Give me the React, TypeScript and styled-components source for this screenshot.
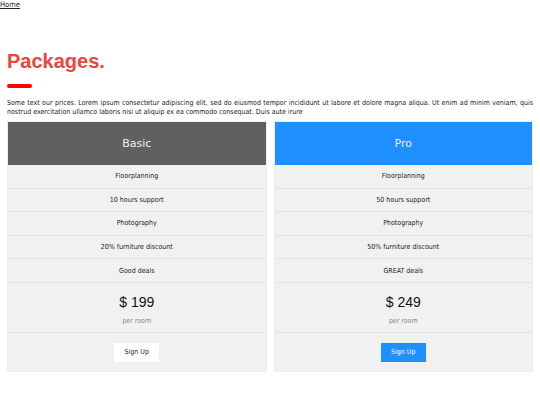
import { createGlobalStyle } from 'styled-components';
import styled from 'styled-components';

const GlobalStyle = createGlobalStyle`
  body {
    margin: 0;
    background: #fff;
    font-family: 'DejaVu Sans Condensed', 'DejaVu Sans', Verdana, sans-serif;
    color: #222;
  }
`;

type Plan = {
  name: string;
  color: string;
  features: string[];
  price: string;
  primary?: boolean;
};

const plans: Plan[] = [
  {
    name: 'Basic',
    color: '#606060',
    features: [
      'Floorplanning',
      '10 hours support',
      'Photography',
      '20% furniture discount',
      'Good deals',
    ],
    price: '$ 199',
  },
  {
    name: 'Pro',
    color: '#1e90ff',
    features: [
      'Floorplanning',
      '50 hours support',
      'Photography',
      '50% furniture discount',
      'GREAT deals',
    ],
    price: '$ 249',
    primary: true,
  },
];

export default function App() {
  return (
    <>
      <GlobalStyle />
      <HomeLink href="#">Home</HomeLink>
      <Page>
        <Title>Packages.</Title>
        <Underline />
        <Intro>
          Some text our prices. Lorem ipsum consectetur adipiscing elit, sed do
          eiusmod tempor incididunt ut labore et dolore magna aliqua. Ut enim ad
          minim veniam, quis nostrud exercitation ullamco laboris nisi ut aliquip
          ex ea commodo consequat. Duis aute irure
        </Intro>
        <Columns>
          {plans.map((plan) => (
            <PriceList key={plan.name}>
              <Header $bg={plan.color}>{plan.name}</Header>
              {plan.features.map((f) => (
                <Item key={f}>{f}</Item>
              ))}
              <PriceBlock>
                <Amount>{plan.price}</Amount>
                <Per>per room</Per>
              </PriceBlock>
              <ButtonRow>
                <SignUp $primary={plan.primary}>Sign Up</SignUp>
              </ButtonRow>
            </PriceList>
          ))}
        </Columns>
      </Page>
    </>
  );
}

const HomeLink = styled.a`
  display: block;
  font-size: 7.5px;
  line-height: 9px;
  color: #222;
  text-decoration: underline;
`;

const Page = styled.div`
  padding: 0 7px;
`;

const Title = styled.h1`
  margin: 40px 0 0;
  font-family: 'Liberation Sans', Arial, sans-serif;
  font-size: 20px;
  line-height: 24px;
  font-weight: bold;
  color: #e8473c;
`;

const Underline = styled.div`
  width: 25px;
  height: 4px;
  margin-top: 11px;
  border-radius: 2px;
  background: #f00;
`;

const Intro = styled.p`
  margin: 11px 0 0;
  font-size: 7px;
  line-height: 9px;
  text-align: justify;
  color: #222;
`;

const Columns = styled.div`
  display: grid;
  grid-template-columns: 1fr 1fr;
  gap: 7px;
  margin-top: 4px;
`;

const PriceList = styled.ul`
  list-style: none;
  margin: 0;
  padding: 0;
  background: #f1f1f1;
  border: 1px solid #eee;
`;

const Header = styled.li<{ $bg: string }>`
  height: 43px;
  display: flex;
  align-items: center;
  justify-content: center;
  background: ${(p) => p.$bg};
  color: #eee;
  font-family: 'DejaVu Sans', Verdana, sans-serif;
  font-size: 11px;
`;

const Item = styled.li`
  height: 23.6px;
  display: flex;
  align-items: center;
  justify-content: center;
  border-bottom: 1px solid #e2e2e2;
  box-sizing: border-box;
  font-size: 7px;
  color: #222;
`;

const PriceBlock = styled.li`
  height: 50px;
  display: flex;
  flex-direction: column;
  align-items: center;
  justify-content: center;
  gap: 7px;
  padding-top: 4px;
  border-bottom: 1px solid #e2e2e2;
  box-sizing: border-box;
`;

const Amount = styled.div`
  font-family: 'Liberation Sans', Arial, sans-serif;
  font-size: 14px;
  line-height: 16px;
  color: #111;
`;

const Per = styled.div`
  font-size: 7px;
  color: #888;
`;

const ButtonRow = styled.li`
  height: 38px;
  display: flex;
  align-items: center;
  justify-content: center;
  padding-top: 1px;
  box-sizing: border-box;
`;

const SignUp = styled.button<{ $primary?: boolean }>`
  width: 45px;
  height: 19px;
  padding: 0;
  border: none;
  font-family: inherit;
  font-size: 7px;
  background: ${(p) => (p.$primary ? '#1e90ff' : '#fff')};
  color: ${(p) => (p.$primary ? '#fff' : '#222')};
`;
